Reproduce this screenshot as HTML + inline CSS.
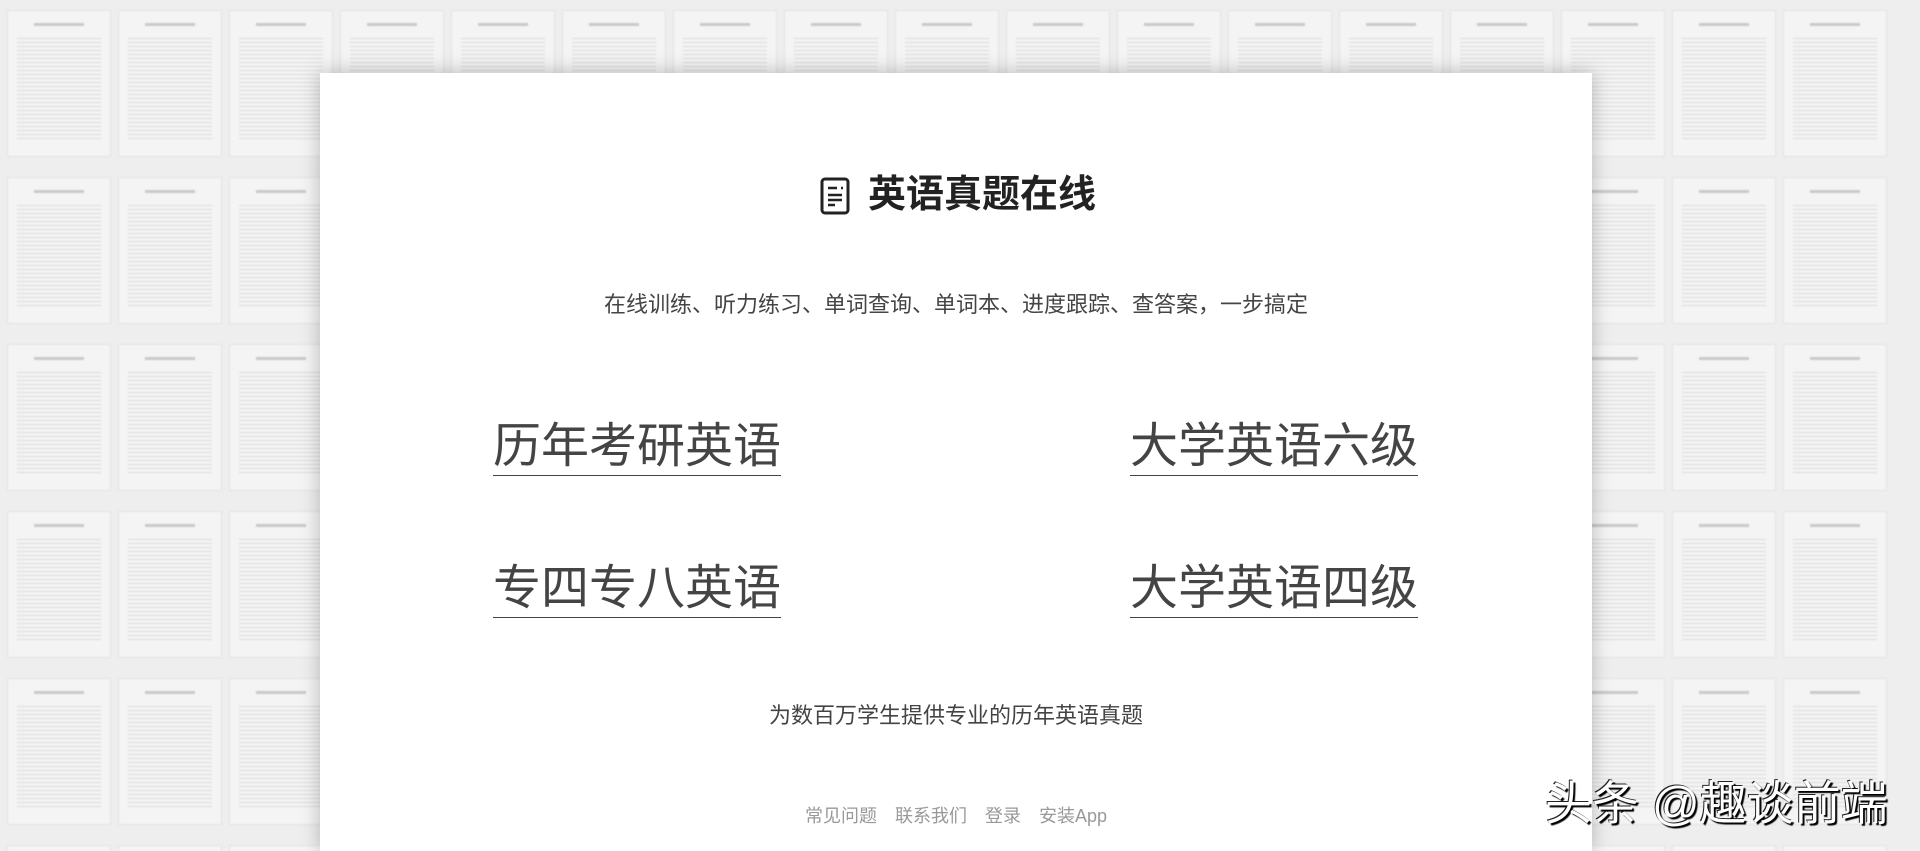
<!DOCTYPE html>
<html><head><meta charset="utf-8">
<style>
html,body{margin:0;padding:0;width:1920px;height:851px;overflow:hidden;background:#eeeeee;}
body{position:relative;font-family:"Liberation Sans","Noto Sans CJK SC",sans-serif;}
#bg{position:absolute;left:0;top:0;width:1920px;height:851px;box-sizing:border-box;overflow:hidden;display:flex;flex-wrap:wrap;align-content:flex-start;padding:10px 0 0 7px;filter:blur(0.7px);}
#bg i{display:block;flex:none;width:104px;height:147px;margin:0 7px 20px 0;background:#f4f4f4;
 border:1px solid #e2e2e2;box-sizing:border-box;position:relative;}
#bg i:before{content:"";position:absolute;left:26px;right:26px;top:12px;height:3px;background:#c8c8c8;}
#bg i:after{content:"";position:absolute;left:9px;right:9px;top:24px;bottom:14px;
 background:repeating-linear-gradient(#f4f4f4 0 3px,#d4d4d4 3px 4px);opacity:.85;}
#panel{position:absolute;left:320px;top:73px;width:1272px;height:778px;background:#fff;box-shadow:0 0 18px rgba(0,0,0,.25);}
.t{position:absolute;left:0;width:1272px;text-align:center;}
h1{margin:0;position:absolute;left:548px;top:100px;font-size:38px;font-weight:bold;color:#222;line-height:44px;}
.ico{position:absolute;left:500px;top:104px;}
.sub{top:217px;font-size:22px;color:#444;line-height:30px;}
.big{position:absolute;font-size:48px;color:#444;line-height:56px;border-bottom:1.5px solid #444;white-space:nowrap;}
.tag{top:628px;font-size:22px;color:#444;line-height:30px;}
.foot{top:731px;font-size:18px;color:#999;line-height:24px;}
.foot span{margin:0 9px;}
#wm{position:absolute;left:1545px;top:776px;font-size:47px;line-height:56px;color:#fff;text-shadow:2px 2px 1px #000,-1px -1px 0 #222;white-space:nowrap;}
</style></head><body>
<div id="bg">
<i></i><i></i><i></i><i></i><i></i><i></i><i></i><i></i><i></i><i></i><i></i><i></i><i></i><i></i><i></i><i></i><i></i><i></i>
<i></i><i></i><i></i><i></i><i></i><i></i><i></i><i></i><i></i><i></i><i></i><i></i><i></i><i></i><i></i><i></i><i></i><i></i>
<i></i><i></i><i></i><i></i><i></i><i></i><i></i><i></i><i></i><i></i><i></i><i></i><i></i><i></i><i></i><i></i><i></i><i></i>
<i></i><i></i><i></i><i></i><i></i><i></i><i></i><i></i><i></i><i></i><i></i><i></i><i></i><i></i><i></i><i></i><i></i><i></i>
<i></i><i></i><i></i><i></i><i></i><i></i><i></i><i></i><i></i><i></i><i></i><i></i><i></i><i></i><i></i><i></i><i></i><i></i>
<i></i><i></i><i></i><i></i><i></i><i></i><i></i><i></i><i></i><i></i><i></i><i></i><i></i><i></i><i></i><i></i><i></i><i></i>
</div>
<div id="panel">
<svg class="ico" width="30" height="38" viewBox="0 0 30 38"><rect x="2" y="2" width="26" height="34" rx="3" fill="none" stroke="#222" stroke-width="3"/><path d="M8 11h9M21 11h2M8 18h14M8 23h14M8 28h7" stroke="#222" stroke-width="2.5" fill="none"/></svg>
<h1>英语真题在线</h1>
<div class="t sub">在线训练、听力练习、单词查询、单词本、进度跟踪、查答案，一步搞定</div>
<div class="big" style="left:173px;top:346px;">历年考研英语</div>
<div class="big" style="left:810px;top:346px;">大学英语六级</div>
<div class="big" style="left:173px;top:488px;">专四专八英语</div>
<div class="big" style="left:810px;top:488px;">大学英语四级</div>
<div class="t tag">为数百万学生提供专业的历年英语真题</div>
<div class="t foot"><span>常见问题</span><span>联系我们</span><span>登录</span><span>安装App</span></div>
</div>
<div id="wm">头条 @趣谈前端</div>
</body></html>
